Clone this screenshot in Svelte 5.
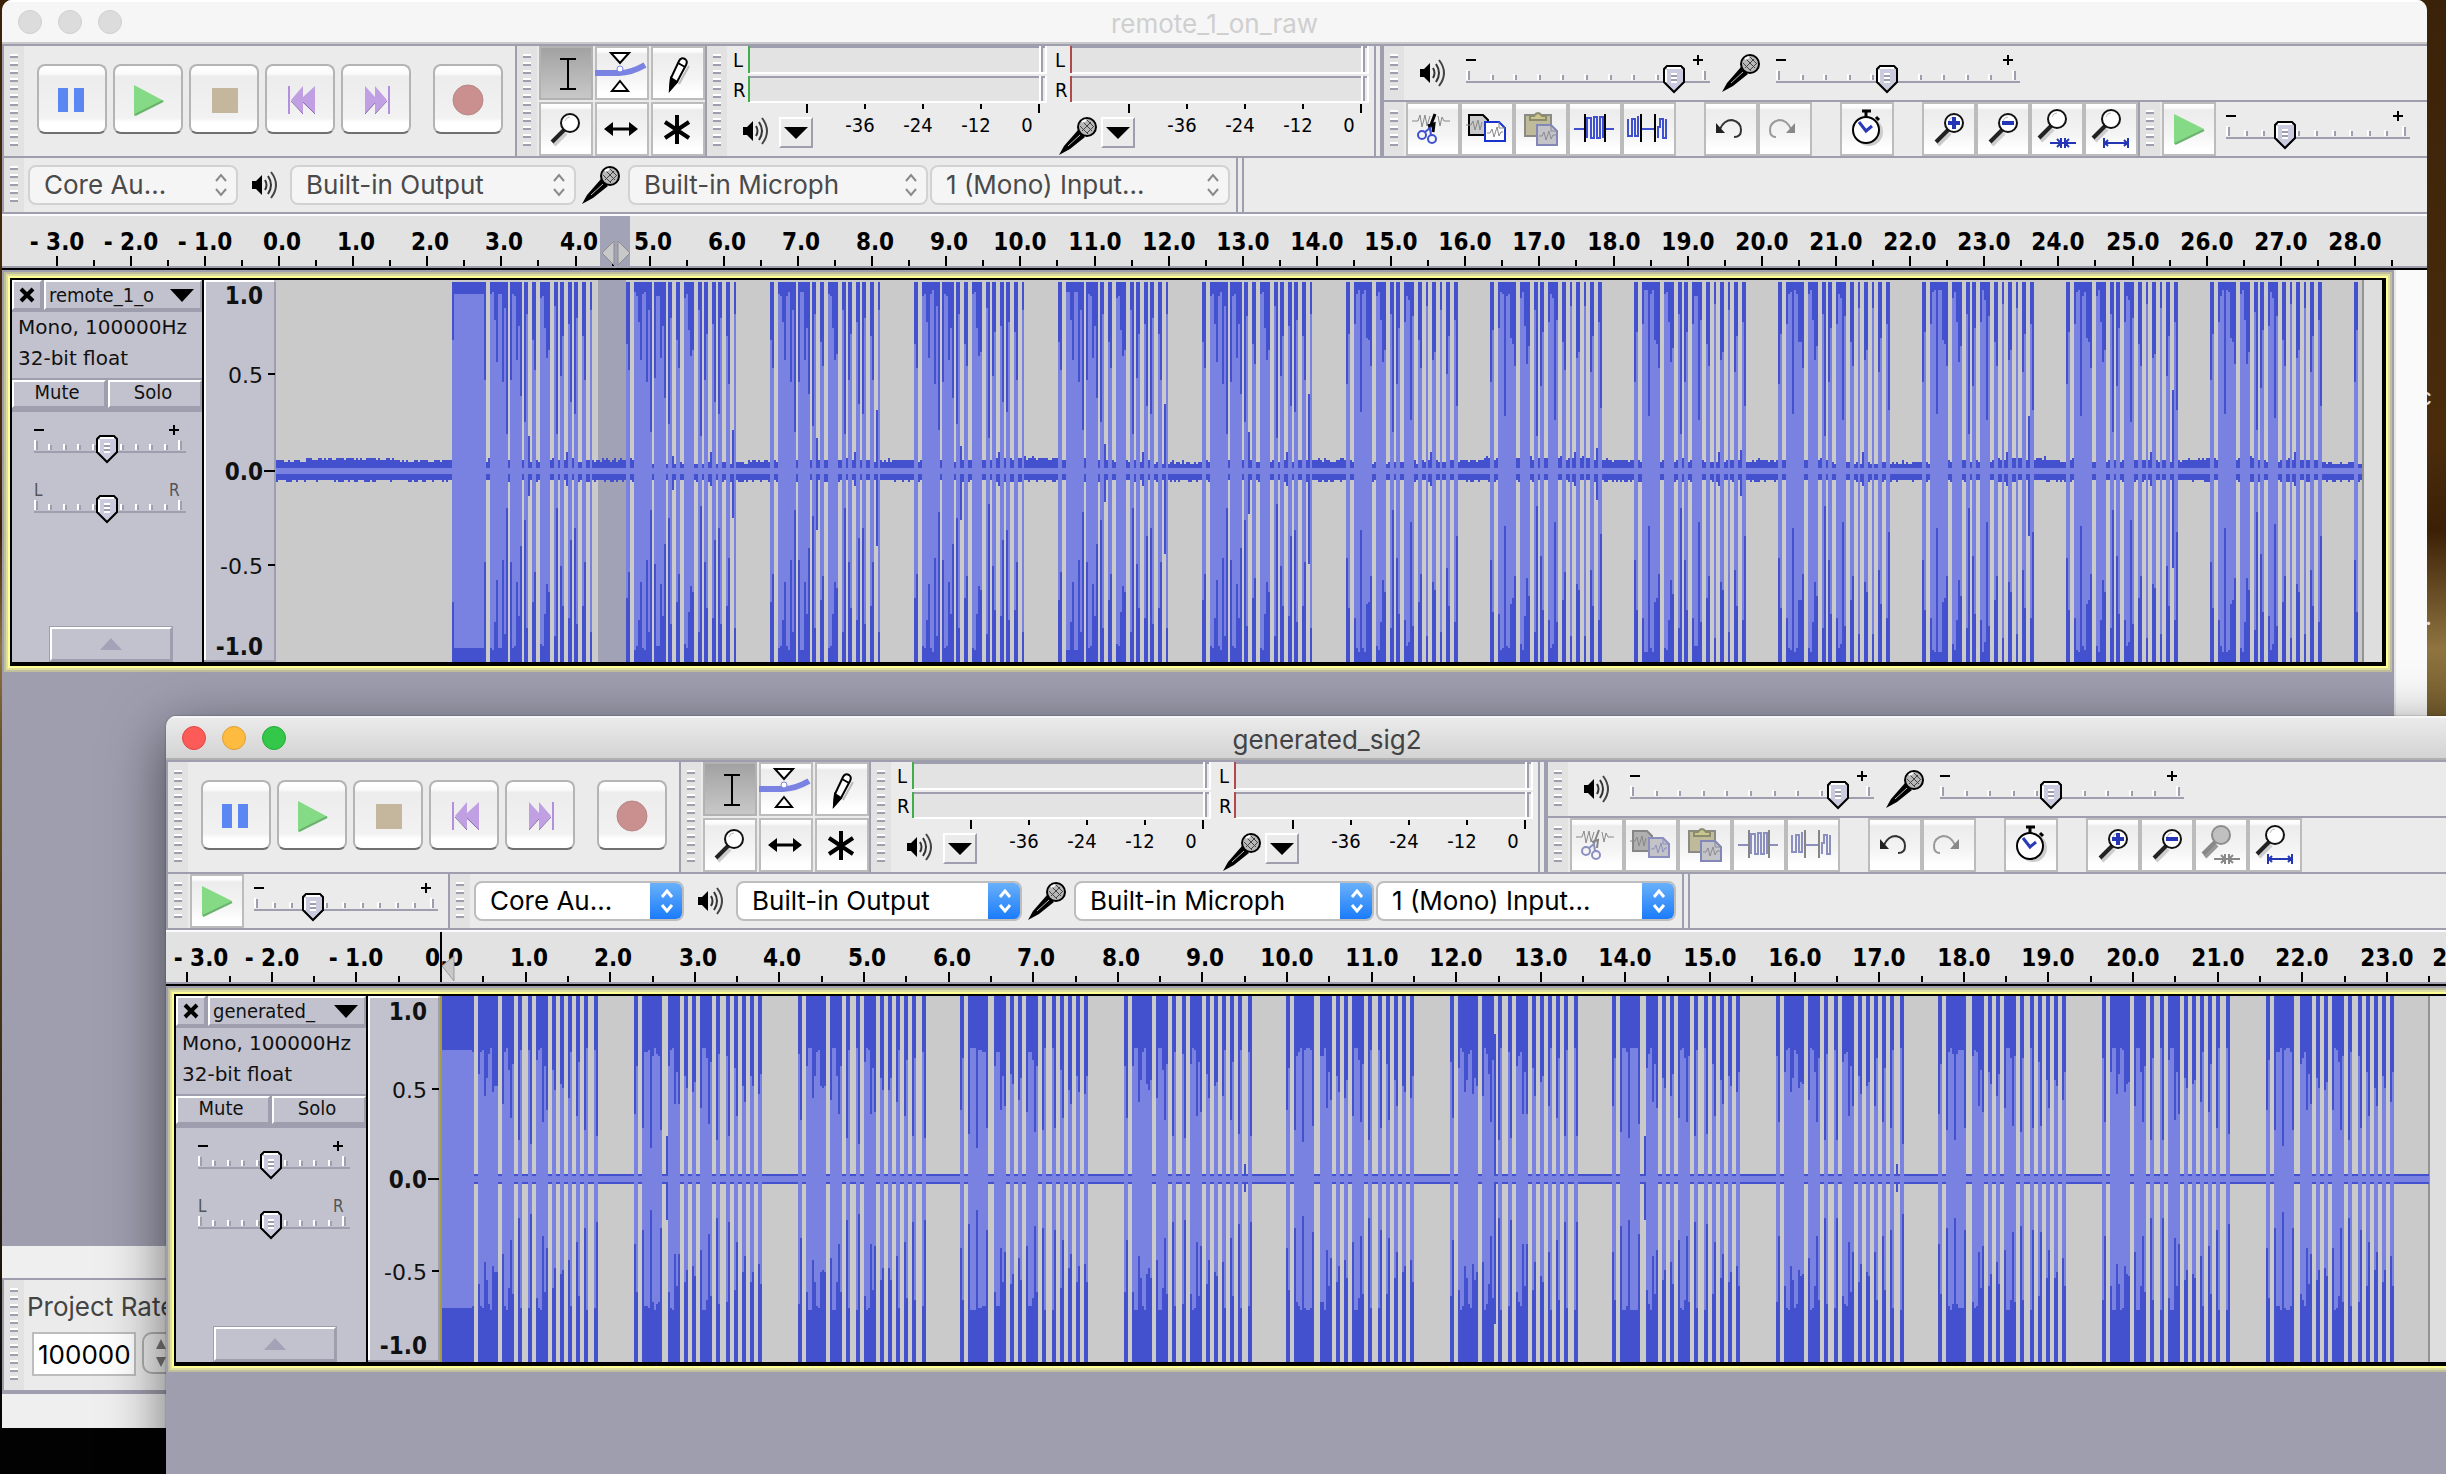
<script>
  const HOSTS = ['Core Au...'];
  const OUTPUTS = ['Built-in Output'];
  const INPUTS = ['Built-in Microph'];
  const CHANNELS = ['1 (Mono) Input...'];

  // Each bar of a burst: [offset, width, light-band tops per 2px column]
  const remoteEarly = [
    [0, 4, [215, 293]],
    [8, 18, [72, 72, 156, 275, 72, 66, 342, 114, 486]],
    [28, 12, [330, 72, 72, 270, 168, 378]],
    [42, 4, [462, 138]],
    [50, 4, [216, 293]],
    [58, 10, [78, 72, 174, 264, 246]],
    [72, 4, [114, 498]],
    [78, 4, [324, 192]],
    [86, 4, [162, 402]],
    [92, 4, [432, 150]],
    [100, 4, [192, 336]],
    [108, 2, [126]]
  ];
  const remoteLate = [
    [0, 4, [340, 185]],
    [8, 18, [165, 70, 66, 430, 70, 66, 210, 220, 288]],
    [30, 10, [78, 66, 160, 274, 236]],
    [44, 4, [126, 490]],
    [50, 4, [345, 180]],
    [58, 10, [162, 70, 84, 454, 144]],
    [72, 4, [216, 294]],
    [80, 2, [108]],
    [86, 4, [264, 243]],
    [94, 2, [114]],
    [100, 4, [312, 198]],
    [108, 4, [156, 414]]
  ];
  const signalEven = [
    [0, 4, [384, 252]],
    [8, 20, [450, 210, 204, 210, 492, 210, 204, 204, 216, 450]],
    [34, 12, [246, 216, 204, 372, 270, 378]],
    [50, 4, [294, 330]],
    [58, 4, [348, 288]],
    [66, 12, [396, 204, 204, 240, 438, 240]],
    [82, 4, [468, 216]],
    [92, 4, [216, 456]],
    [100, 4, [258, 420]],
    [108, 4, [312, 384]],
    [116, 4, [306, 330]],
    [124, 4, [348, 288]]
  ];
  const signalOdd = [
    [0, 4, [240, 414]],
    [8, 20, [270, 210, 210, 354, 288, 210, 216, 324, 312, 318]],
    [32, 12, [366, 204, 204, 270, 420, 246]],
    [48, 4, [468, 216]],
    [58, 4, [210, 474]],
    [66, 12, [240, 210, 204, 414, 264, 396]],
    [82, 4, [282, 342]],
    [90, 4, [318, 306]],
    [98, 4, [366, 216]],
    [106, 4, [408, 246]],
    [114, 4, [456, 216]],
    [124, 4, [210, 474]]
  ];

  const rect = (x, y, w, h) => `M${x} ${y}h${w}v${h}h${-w}z`;
  const even = (n) => Math.round(n / 2) * 2;

  function noise(seed) {
    let s = seed;
    return () => ((s = (s * 1103515245 + 12345) % 2147483648), s / 2147483648);
  }

  function remoteWave() {
    const mid = 191;
    const rnd = noise(7);
    let dark = '';
    let light = '';
    for (let x = 0; x < 2086; x += 2) {
      const drift = Math.sin(x / 38) + Math.sin(x / 91);
      const top = even(180 - drift + (rnd() < 0.4 ? 2 : 0) - (x > 180 && rnd() < 0.15 ? 2 : 0));
      const bottom = even(199 + (rnd() < 0.3 ? 2 : 0));
      dark += rect(x, top, 2, bottom - top);
    }
    light += rect(0, 188, 2086, 6);
    dark += rect(176, 2, 34, 380);
    light += rect(176, 60, 2, 262) + rect(178, 14, 30, 354) + rect(208, 100, 2, 182);
    for (let k = 0; k <= 13; k++) {
      const start = 206 + 144 * k;
      const bars = k < 6 ? remoteEarly : remoteLate;
      bars.forEach(([off, w, tops], i) => {
        if (k === 0 && i === 0) return;
        if (k === 13 && i > 0) return;
        dark += rect(start + off, 2, w, 380);
        tops.forEach((t, c) => {
          const y = even(t / 3 - 10 + (rnd() - 0.5) * 6);
          light += rect(start + off + c * 2, y, 2, 2 * (mid - y));
        });
      });
      if (k < 13) {
        const a = 150 + rnd() * 26;
        dark += rect(start + 46, even(a), 2, even(206 - a + rnd() * 50));
        dark += rect(start + 84, even(172), 2, 34);
        const b = 96 + rnd() * 76;
        if (k % 3 !== 0) dark += rect(start + 106, even(b), 2, even((mid - b) * 2.2));
      }
    }
    return { dark, light };
  }

  function signalWave() {
    const mid = 183;
    const rnd = noise(21);
    let dark = rect(0, 178, 1989, 10);
    let light = rect(0, 180, 1989, 6);
    dark += rect(2, 0, 32, 366);
    light += rect(0, 54, 32, 258) + rect(32, 56, 2, 254);
    for (let k = -1; k <= 10; k++) {
      const start = even(194 + 163.1 * k);
      const bars = k % 2 === 0 ? signalEven : signalOdd;
      bars.forEach(([off, w, tops], i) => {
        if (k === -1 && i === 0) return;
        dark += rect(start + off, 0, w, 366);
        tops.forEach((t, c) => {
          const y = Math.max(52, even(t / 3 - 16 + (rnd() - 0.5) * 12));
          light += rect(start + off + c * 2, y, 2, 2 * (mid - y));
        });
      });
      if (k % 3 === 2) dark += rect(start + 44, 38, 2, 290);
      if (k % 3 === 0) dark += rect(start + 32, 140, 2, 84);
      if (k % 4 === 3) dark += rect(start + 120, 168, 2, 28);
    }
    return { dark, light };
  }

  function timeline(zero, step, last, limit) {
    const marks = [];
    for (let i = -6; i <= last * 2 + 1; i++) {
      const n = i / 2;
      const major = i % 2 === 0;
      const x = Math.round(zero + step * n);
      const label = major ? (n < 0 ? `- ${-n}.0` : `${n}.0`) : '';
      const shift = n < 0 ? 0 : n < 10 ? 3 : 0;
      marks.push({ x, major, label, at: Math.max(33, Math.min(x + shift, limit)) });
    }
    return marks;
  }

  const windows = [
    {
      id: 'remote',
      title: 'remote_1_on_raw',
      name: 'remote_1_o',
      active: false,
      height: 382,
      length: 2086,
      wave: remoteWave(),
      selection: { x: 322, w: 28 },
      marks: timeline(275, 74.14, 28, 2400),
      scale: [['1.0', 15, true], ['0.5', 94, false], ['0.0', 191, true], ['-0.5', 285, false], ['-1.0', 366, true]]
    },
    {
      id: 'generated',
      title: 'generated_sig2',
      name: 'generated_',
      active: true,
      height: 366,
      length: 1988,
      wave: signalWave(),
      selection: null,
      marks: timeline(273, 84.6, 24, 2291),
      scale: [['1.0', 15, true], ['0.5', 93, false], ['0.0', 183, true], ['-0.5', 275, false], ['-1.0', 349, true]]
    }
  ];

  const transport = ['Pause', 'Play', 'Stop', 'Skip to Start', 'Skip to End', 'Record'];
  const tools = ['Selection', 'Envelope', 'Draw', 'Zoom', 'Time Shift', 'Multi'];
  const editGroups = [
    ['Cut', 'Copy', 'Paste', 'Trim', 'Silence'],
    ['Undo', 'Redo'],
    ['Sync-Lock'],
    ['Zoom In', 'Zoom Out', 'Fit Selection', 'Fit Project']
  ];
  const dimmed = (active, name) =>
    name === 'Paste' || name === 'Redo' ||
    (active && ['Cut', 'Copy', 'Trim', 'Silence', 'Fit Selection'].includes(name));
</script>

{#snippet speaker()}
  <svg class="speaker" viewBox="0 0 26 28" aria-hidden="true">
    <path d="M0 10h4l6-6v20l-6-6H0z" fill="#000" />
    <path d="M13 9q3 5 0 10M16 5q6 9 0 18" fill="none" stroke="#333" stroke-width="2" />
    <path d="M19 1q10 13 0 26" fill="none" stroke="#444" stroke-width="2" />
  </svg>
{/snippet}

{#snippet mic()}
  <svg class="mic" viewBox="0 0 38 38" aria-hidden="true">
    <path d="M0 38L5 29L19 13L26 20L11 32Z" fill="#000" />
    <path d="M9 29L21 18" stroke="#bbb" stroke-width="1" />
    <circle cx="28" cy="10" r="9" fill="#b8b8b8" stroke="#000" stroke-width="2" />
    <path d="M24 5l9 9M28 3l7 7M21 9l8 8M32 5L23 14M34 10l-6 6" stroke="#444" />
    <path d="M23 5l4-2" stroke="#fff" stroke-width="2" />
  </svg>
{/snippet}

{#snippet slider(label, w, pos, ends)}
  <div class="slider">
    <svg width={w} height="40" viewBox={`0 0 ${w} 40`} aria-hidden="true" shape-rendering="crispEdges">
      {#if ends === 'LR'}
        <text class="pan" x="0" y="12">L</text>
        <text class="pan" x={w - 17} y="12">R</text>
      {:else}
        <path d={`M0 6h10M${w - 17} 6h10M${w - 12} 1v10`} stroke="#000" stroke-width="2" />
      {/if}
      {#each Array(11) as _, i}
        {@const x = 1 + Math.round(((w - 8) * i) / 10)}
        {@const y = i % 10 === 0 ? 16 : 20}
        <path d={`M${x} ${y}V26`} stroke="#fff" stroke-width="2" />
        <path d={`M${x + 2} ${y + 1}V26`} stroke="#9e9eaf" stroke-width="2" />
      {/each}
      <path d={`M0 28H${w}`} stroke="#9e9eaf" stroke-width="2" />
      <g transform={`translate(${pos - 11} 11)`} shape-rendering="auto">
        <path d="M4 1H18L21 4V17L11 27L1 17V4Z" fill="#cbcbdf" stroke="#000" stroke-width="2" />
        <path d="M4 3H18M3 5V17" stroke="#fff" stroke-width="2" />
        <path d="M8 9h6M8 13h6M8 17h6" stroke="#fff" stroke-width="2" />
        <path d="M8 11h6M8 15h6" stroke="#9e9eaf" stroke-width="2" />
      </g>
    </svg>
    <input type="range" aria-label={label} min="0" max={w} value={pos} />
  </div>
{/snippet}

{#snippet transportIcon(name)}
  <svg viewBox="0 0 70 70" aria-hidden="true">
    {#if name === 'Pause'}
      <path d="M21 24h10v24H21zM37 24h10v24H37z" fill="#5b87f2" />
    {:else if name === 'Play'}
      <path d="M21 21L51 37L21 52Z" fill="#85da86" />
      <path d="M22 51L50 37" stroke="#6bb36d" stroke-width="2" />
    {:else if name === 'Stop'}
      <path d="M23 24h26v25H23z" fill="#c4b79d" />
    {:else if name === 'Skip to Start'}
      <path d="M26 36L38 22V33L50 22V50L38 39V50Z" fill="#c0a0e2" />
      <path d="M38 50L26 37M50 50L38 38" stroke="#8f6fae" />
      <path d="M24 22V50" stroke="#b48fdd" stroke-width="2" />
    {:else if name === 'Skip to End'}
      <path d="M46 36L34 22V33L24 22V50L34 39V50Z" fill="#c0a0e2" />
      <path d="M24 50L34 39M34 50L46 37" stroke="#8f6fae" />
      <path d="M48 22V50" stroke="#b48fdd" stroke-width="2" />
    {:else}
      <circle cx="35" cy="36" r="15" fill="#ca9090" stroke="#b98585" />
    {/if}
  </svg>
{/snippet}

{#snippet glass(cx, cy, off)}
  <path d={`M${cx - 6} ${cy + 9}L${cx - 18} ${cy + 21}`} stroke={off ? '#999' : '#ccc'} stroke-width="4" transform="translate(2 1)" />
  <path d={`M${cx - 6} ${cy + 7}L${cx - 18} ${cy + 19}`} stroke={off ? '#888' : '#222'} stroke-width="4" />
  <circle {cx} {cy} r="9" fill={off ? '#c0c0c0' : '#fff'} stroke={off ? '#8c8c8c' : '#111'} stroke-width="2" />
  <path d={`M${cx - 5} ${cy - 2}q1-4 5-4`} stroke="#bbb" stroke-width="1" fill="none" />
{/snippet}

{#snippet toolIcon(name, off)}
  {@const ink = off ? '#858585' : '#000'}
  {@const blue = off ? '#8a8fc0' : '#3f50d0'}
  <svg viewBox="0 0 54 54" fill="none" aria-hidden="true">
    {#if name === 'Selection'}
      <path d="M21 13H27M31 13H37M21 43H27M31 43H37M29 14V42" stroke="#000" stroke-width="2" />
      <path d="M26 13h6M26 43h6" stroke="#000" stroke-width="2" />
    {:else if name === 'Envelope'}
      <path d="M0 27H24Q36 27 50 19" stroke="#7a82e2" stroke-width="6" />
      <path d="M16 7H34L25 17ZM25 35L33 45H17Z" fill="#fff" stroke="#000" stroke-width="2" />
      <circle cx="25" cy="23" r="3" fill="#fff" stroke="#7a82e2" />
    {:else if name === 'Draw'}
      <path d="M28 15q2-4 6-2q3 2 1 6L26 36l-7 7 1-11Z" fill="#fff" stroke="#000" stroke-width="2" />
      <path d="M20 32l6 4-7 8ZM27 17l7 4" fill="#000" stroke="#000" stroke-width="2" />
      <path d="M38 20L28 38" stroke="#bbb" stroke-width="2" />
    {:else if name === 'Zoom'}
      {@render glass(31, 21, false)}
    {:else if name === 'Time Shift'}
      <path d="M14 27H38" stroke="#000" stroke-width="3" />
      <path d="M9 27L18 20V34ZM43 27L34 20V34Z" fill="#000" />
    {:else if name === 'Multi'}
      <path d="M26 13V42M14 20L38 36M38 20L14 36" stroke="#000" stroke-width="4" />
    {:else if name === 'Cut'}
      <path d="M6 19H12L14 13L16 25L19 13L21 24L24 14M32 14L34 24L36 15L38 19H44" stroke="#888" stroke-width="1" />
      <path d="M29 12L23 28M22 24L28 22L27 30" stroke={ink} stroke-width={off ? 2 : 3} />
      <circle cx="16" cy="33" r="4" stroke={blue} stroke-width="2" />
      <circle cx="26" cy="37" r="4" stroke={blue} stroke-width="2" />
      <path d="M19 30L24 26L25 33" stroke={blue} stroke-width="2" />
    {:else if name === 'Copy'}
      <path d="M9 13H23L28 18V33H9Z" fill={off ? '#b0b0b0' : '#cacaca'} stroke={ink} stroke-width="2" />
      <path d="M6 23H11L13 19L15 28L18 18L20 28L22 20" stroke="#888" />
      <path d="M25 20H39L45 26V39H25Z" fill={off ? '#c4c4c8' : '#fff'} stroke={off ? '#8a8fc0' : '#1933cf'} stroke-width="2" />
      <path d="M27 31H30L32 27L34 35L37 25L39 34L41 30H43M39 20V26H45" stroke={off ? '#8a8fc0' : '#888'} />
    {:else if name === 'Paste'}
      <path d="M11 13H37V34H11Z" fill="#bfbb9a" stroke="#8b8b86" stroke-width="2" />
      <path d="M16 18V14H20Q24 8 28 14H32V18Z" fill="#c9c58c" stroke="#8b8b70" stroke-width="2" />
      <path d="M23 23H37L43 29V43H23Z" fill="#c4c4c8" stroke="#8287b8" stroke-width="2" />
      <path d="M25 34H28L30 30L32 38L35 29L37 37L39 33H42M37 23V29H43" stroke="#8a8a92" />
    {:else if name === 'Trim'}
      <path d="M6 27H17M38 27H46" stroke={blue} stroke-width="2" />
      <path d="M19 36V16H23V36H26V15H29V36H32V15H35V36" stroke={blue} stroke-width="2" />
      <path d="M17 12V40M37 12V40" stroke={ink} stroke-width="2" />
    {:else if name === 'Silence'}
      <path d="M6 17V34H10V17H13V34H16V14M20 27H33M36 36V25H38V17H41V36H44V17" stroke={blue} stroke-width="2" />
      <path d="M19 12V40M33 12V40" stroke={ink} stroke-width="2" />
    {:else if name === 'Undo'}
      <path d="M16 27Q20 18 28 18Q37 20 37 28Q37 35 30 35" stroke="#333" stroke-width="2" />
      <path d="M12 21V31H21Z" fill="#222" />
    {:else if name === 'Redo'}
      <path d="M33 27Q29 18 21 18Q12 20 12 28Q12 35 18 35" stroke="#999" stroke-width="2" />
      <path d="M37 21V31H28Z" fill="#888" />
    {:else if name === 'Sync-Lock'}
      <circle cx="29" cy="30" r="14" fill="#ccc" />
      <circle cx="26" cy="28" r="13" fill="#fff" stroke="#000" stroke-width="2" />
      <path d="M22 9H31M26 9V15M36 15L39 18" stroke="#000" stroke-width="3" />
      <path d="M19 20L26 29L32 24" stroke="#2a3bb8" stroke-width="3" />
    {:else if name === 'Zoom In'}
      {@render glass(32, 21, false)}
      <path d="M26 21H38M32 15V27" stroke="#2536b5" stroke-width="4" />
    {:else if name === 'Zoom Out'}
      {@render glass(32, 21, false)}
      <path d="M26 21H38" stroke="#2536b5" stroke-width="4" />
    {:else if name === 'Fit Selection'}
      {@render glass(27, 17, off)}
      <path d="M20 41H46M31 36V46M35 36V46M27 37L31 41L27 45M39 37L35 41L39 45" stroke={off ? '#888' : '#2536b5'} stroke-width="2" />
    {:else if name === 'Fit Project'}
      {@render glass(27, 17, false)}
      <path d="M20 41H44M20 36V46M44 36V46M24 38L21 41L24 44M40 38L43 41L40 44" stroke="#2536b5" stroke-width="2" />
    {:else}
      <path d="M12 12L42 27L12 42Z" fill="#85da86" />
      <path d="M13 42L42 28" stroke="#6bb36d" stroke-width="2" />
    {/if}
  </svg>
{/snippet}

{#snippet meter(kind, color)}
  <div class="meter">
    <svg width="322" height="67" viewBox="0 0 322 67" shape-rendering="crispEdges" role="img" aria-label={`${kind} level`}>
      {#each [['L', 0, 27], ['R', 30, 26]] as [channel, y, h]}
        <text class="channel" x="6" y={y + 21}>{channel}</text>
        <rect x="23" {y} width="290" height={h} fill="#e3e3e3" />
        <path d={`M23 ${y + 1}H320`} stroke="#9e9eaf" stroke-width="2" />
        <path d={`M22 ${y + h}H320M313 ${y}V${y + h}M319 ${y}V${y + h}`} stroke="#fff" stroke-width="2" />
        <path d={`M315 ${y}V${y + h - 1}`} stroke="#9e9eaf" stroke-width="2" />
        <path d={`M22 ${y}v${h}`} stroke={color} stroke-width="2" />
      {/each}
      <path d="M80 58v9M138 58v5M196 58v5M254 58v5M312 58v9" stroke="#000" stroke-width="2" />
    </svg>
    <div class="meter-foot">
      <span class="meter-icon">{#if kind === 'Output'}{@render speaker()}{:else}{@render mic()}{/if}</span>
      <button class="drop" aria-label={`${kind} meter menu`}>
        <svg viewBox="0 0 24 14" aria-hidden="true"><path d="M0 1H24L12 13Z" /></svg>
      </button>
      <div class="decibels"><span>-36</span><span>-24</span><span>-12</span><span>0</span></div>
    </div>
  </div>
{/snippet}

{#snippet picker(label, options, size)}
  <span class="picker {size}">
    <select aria-label={label}>
      {#each options as option}<option>{option}</option>{/each}
    </select>
    <span class="arrows">
      <svg viewBox="0 0 14 24" aria-hidden="true"><path d="M2 8L7 2L12 8M2 16L7 22L12 16" /></svg>
    </span>
  </span>
{/snippet}

{#snippet playSpeed()}
  <div class="grip"></div>
  <button class="tool speed-play" aria-label="Play-at-Speed">{@render toolIcon('Play', false)}</button>
  {@render slider('Playback Speed', 184, 59, 'gain')}
{/snippet}

<main class="desktop">
  <div class="peek"><span>c</span><span>.</span></div>
  {#each windows as win}
    <section class="window {win.id}" class:active={win.active}>
      <header class="titlebar">
        <div class="lights">
          <button aria-label="Close"></button><button aria-label="Minimize"></button><button aria-label="Zoom"></button>
        </div>
        <h1>{win.title}</h1>
      </header>

      <div class="dock">
        <div class="bar transport">
          <div class="grip"></div>
          {#each transport as name}
            <button class="big" class:record={name === 'Record'} aria-label={name}>{@render transportIcon(name)}</button>
          {/each}
        </div>
        <div class="bar">
          <div class="grip"></div>
          <div class="tools">
            {#each tools as name, i}
              <button class="tool" class:pressed={i === 0} aria-label={`${name} Tool`}>{@render toolIcon(name, false)}</button>
            {/each}
          </div>
        </div>
        <div class="bar meters">
          <div class="grip"></div>
          {@render meter('Output', '#3fae49')}
          {@render meter('Input', '#b04a4a')}
        </div>
        <div class="stack">
          <div class="bar mixer">
            <div class="grip"></div>
            {@render speaker()}
            {@render slider('Output Volume', 244, 208, 'gain')}
            {@render mic()}
            {@render slider('Input Volume', 244, 111, 'gain')}
          </div>
          <div class="bar edit">
            <div class="grip"></div>
            <div class="groups">
              {#each editGroups as group}
                <div class="group">
                  {#each group as name}
                    <button class="tool" aria-label={name}>{@render toolIcon(name, dimmed(win.active, name))}</button>
                  {/each}
                </div>
              {/each}
            </div>
            {#if !win.active}
              <div class="bar speed">{@render playSpeed()}</div>
            {/if}
          </div>
        </div>
      </div>

      <div class="devices">
        {#if win.active}
          <div class="bar speed lead">{@render playSpeed()}</div>
        {/if}
        <div class="grip"></div>
        {@render picker('Audio Host', HOSTS, 'host')}
        {@render speaker()}
        {@render picker('Output Device', OUTPUTS, 'output')}
        {@render mic()}
        {@render picker('Input Device', INPUTS, 'input')}
        {@render picker('Input Channels', CHANNELS, 'channels')}
        <div class="stop"></div>
      </div>

      <div class="timeline">
        <svg width="100%" height="50" shape-rendering="crispEdges" role="img" aria-label="Timeline">
          {#if win.selection}
            <rect x="596" y="0" width="30" height="50" fill="#a3a3b8" />
          {/if}
          {#each win.marks as mark}
            <path d={`M${mark.x} ${mark.major ? 40 : 44}V50`} stroke="#000" stroke-width="2" />
            {#if mark.label}<text x={mark.at} y="34">{mark.label}</text>{/if}
          {/each}
          {#if win.selection}
            <path d="M610 25V49L598 37ZM614 25V49L626 37Z" fill="#c8c8c8" stroke="#8d8d8d" shape-rendering="auto" />
          {:else}
            <path d="M286 24V49L274 34Z" fill="#c8c8c8" stroke="#999" shape-rendering="auto" />
            <path d="M273 0V50" stroke="#000" stroke-width="2" />
          {/if}
        </svg>
      </div>

      <div class="workspace">
        <div class="canvas">
          <article class="track">
            <div class="panel">
              <div class="panel-head">
                <button class="flat close" aria-label="Close track">
                  <svg viewBox="0 0 16 16" aria-hidden="true"><path d="M2 2L14 14M14 2L2 14" stroke="#000" stroke-width="4" /></svg>
                </button>
                <button class="flat name">
                  <span>{win.name}</span>
                  <svg viewBox="0 0 24 13" aria-hidden="true"><path d="M0 0H24L12 13Z" /></svg>
                </button>
              </div>
              <p class="info">Mono, 100000Hz<br />32-bit float</p>
              <div class="mutes">
                <button class="flat">Mute</button>
                <button class="flat">Solo</button>
              </div>
              <div class="sliders">
                {@render slider('Gain', 152, 73, 'gain')}
                {@render slider('Pan', 152, 73, 'LR')}
              </div>
              <button class="flat collapse" aria-label="Collapse track">
                <svg viewBox="0 0 22 12" aria-hidden="true"><path d="M11 0L22 12H0Z" fill="#a3a3b8" /></svg>
              </button>
            </div>
            <svg class="vruler" width="72" height={win.height} shape-rendering="crispEdges" role="img" aria-label="Amplitude">
              <rect width="72" height={win.height} fill="#c2c2ce" />
              <path d={`M0 1H70M1 0V${win.height}`} stroke="#fff" stroke-width="2" />
              <path d={`M71 2V${win.height}M0 ${win.height - 1}H72`} stroke="#9e9eaf" stroke-width="2" />
              {#each win.scale as [label, y, strong], i}
                <text class:strong x="59" y={y + 9}>{label}</text>
                {#if i > 0 && i < 4}
                  <path d={`M${i === 2 ? 60 : 64} ${y}H71`} stroke="#000" stroke-width="2" />
                {/if}
              {/each}
            </svg>
            <div class="view">
              <svg width="100%" height={win.height} shape-rendering="crispEdges" role="img" aria-label={`${win.name} waveform`}>
                <rect width={win.length} height={win.height} fill="#cacaca" />
                <rect x={win.length} width="2" height={win.height} fill="#939393" />
                {#if win.selection}
                  <rect x={win.selection.x} width={win.selection.w} height={win.height} fill="#a2a2b6" />
                {/if}
                <path d={win.wave.dark} fill="#4351cf" />
                <path d={win.wave.light} fill="#7981e1" />
                {#if !win.selection}
                  <path d={`M1 0V${win.height}`} stroke="#a59c45" stroke-width="2" />
                {/if}
              </svg>
            </div>
          </article>
        </div>
        <div class="scroll"></div>
      </div>

      {#if !win.active}
        <footer class="status">
          <div class="selection-bar">
            <div class="grip"></div>
            <div class="rate">
              <label for="rate">Project Rate (Hz):</label>
              <div class="rate-row">
                <input id="rate" type="text" value="100000" />
                <button class="spin" aria-label="Change rate">
                  <svg viewBox="0 0 12 32" aria-hidden="true"><path d="M6 2L11 12H1ZM6 30L11 20H1Z" fill="#777" /></svg>
                </button>
              </div>
            </div>
          </div>
        </footer>
      {/if}
    </section>
  {/each}
</main>

<style>
  :global(body) {
    margin: 0;
  }
  .desktop {
    --line: #9e9eaf;
    --face: #ebebeb;
    position: relative;
    min-height: 100vh;
    overflow: hidden;
    background: linear-gradient(#3a2208 0, #4a2c0c 30%, #3c2006 36%, #8f7440 44%, #6d5526 50%, #020202 97%);
    font-family: Inter, 'Liberation Sans', sans-serif;
    color: #000;
  }
  .desktop * {
    box-sizing: border-box;
  }
  .peek {
    position: absolute;
    top: 381px;
    right: 14px;
    display: flex;
    flex-direction: column;
    align-items: flex-end;
    gap: 188px;
    color: #e4e4e4;
    font-size: 24px;
    line-height: 32px;
  }
  button {
    padding: 0;
    border: 0;
    background: none;
    font: inherit;
    color: inherit;
  }
  svg {
    display: block;
    flex: none;
  }
  .window {
    position: absolute;
    display: flex;
    flex-direction: column;
    overflow: hidden;
    background: var(--line);
    border-radius: 10px 10px 0 0;
  }
  .remote {
    top: 0;
    left: 2px;
    right: 19px;
    bottom: 46px;
  }
  .generated {
    top: 716px;
    left: 166px;
    right: -42px;
    bottom: -60px;
    box-shadow: 0 16px 60px rgba(0, 0, 0, 0.55), 0 0 2px rgba(0, 0, 0, 0.4);
  }
  .titlebar {
    display: grid;
    grid-template-columns: 1fr auto 1fr;
    align-items: center;
    height: 46px;
    padding: 0 16px;
    background: #f6f6f6;
    border-bottom: 2px solid var(--line);
    box-shadow: inset 0 -2px #c9c9cb, inset 0 2px #fff;
  }
  .active .titlebar {
    background: linear-gradient(#ececec, #d2d2d2);
    box-shadow: inset 0 -2px #b0b0b0, inset 0 2px #f6f6f6;
  }
  .titlebar h1 {
    margin: 3px 0 0;
    font-size: 26px;
    line-height: 32px;
    font-weight: 400;
    color: #cfcfcf;
  }
  .active .titlebar h1 {
    color: #434343;
  }
  .lights {
    display: flex;
    gap: 16px;
  }
  .lights button {
    width: 24px;
    height: 24px;
    border: 1px solid #cfcfcf;
    border-radius: 50%;
    background: #dcdcdc;
  }
  .active .lights button:nth-child(1) {
    background: #fc5b57;
    border-color: #df4744;
  }
  .active .lights button:nth-child(2) {
    background: #fdbc3f;
    border-color: #de9f34;
  }
  .active .lights button:nth-child(3) {
    background: #34c84a;
    border-color: #27aa35;
  }
  .dock,
  .devices {
    display: flex;
    padding-left: 2px;
    background: linear-gradient(var(--line), var(--line)) 0 0 / 2px 100% no-repeat var(--face);
    border-bottom: 2px solid var(--line);
  }
  .dock {
    height: 112px;
  }
  .bar {
    display: flex;
    flex: none;
    align-items: center;
    border-right: 2px solid var(--line);
  }
  .grip {
    display: flex;
    align-self: stretch;
    flex: none;
    width: 20px;
    padding: 8px 6px;
    background: #e2e2e2;
  }
  .grip::before {
    content: '';
    flex: 1;
    background: repeating-linear-gradient(#fff 0 2px, var(--line) 2px 4px, transparent 4px 8px);
  }
  .transport {
    gap: 6px;
    padding-right: 12px;
  }
  .transport .grip {
    margin-right: 7px;
  }
  .big {
    width: 70px;
    height: 70px;
    margin-bottom: 4px;
    border: 2px solid #b4b4b4;
    border-bottom-color: #707070;
    border-radius: 8px;
    background: linear-gradient(#fff 0, #fafafa 12%, #ececec 16%, #f2f2f2 78%, #fff 86%);
    overflow: hidden;
  }
  .big svg {
    width: 70px;
    height: 70px;
    margin: -2px;
  }
  .record {
    margin-left: 16px;
  }
  .tools {
    display: grid;
    grid-template-columns: repeat(3, 54px);
    gap: 2px;
    margin-left: 2px;
  }
  .tool {
    flex: none;
    width: 54px;
    height: 54px;
    border: 2px solid #bcbcbc;
    background: linear-gradient(#fff 0, #fafafa 8%, #ececec 12%, #f4f4f4 60%, #fff 90%);
  }
  .tool svg {
    width: 54px;
    height: 54px;
    margin: -2px;
  }
  .pressed {
    border-color: #b2b2b2;
    background: linear-gradient(#a2a2a2, #c8c8c8);
  }
  .meters {
    padding-right: 3px;
    margin-right: 4px;
  }
  .meter {
    display: flex;
    flex-direction: column;
    width: 322px;
    height: 110px;
    font-family: 'DejaVu Sans', sans-serif;
    font-size: 20px;
  }
  .channel {
    font-family: 'DejaVu Sans Condensed', 'DejaVu Sans', sans-serif;
    font-size: 20px;
  }
  .meter-foot {
    display: flex;
    align-items: flex-start;
    padding-top: 4px;
  }
  .meter-icon {
    display: flex;
    justify-content: center;
    width: 55px;
    padding-left: 6px;
  }
  .drop {
    display: grid;
    place-items: center;
    width: 36px;
    height: 31px;
    border: 2px solid #fff;
    border-right-color: var(--line);
    border-bottom-color: var(--line);
  }
  .drop svg {
    width: 24px;
    height: 14px;
  }
  .decibels {
    display: flex;
    margin-left: 18px;
    font-family: 'DejaVu Sans Condensed', 'DejaVu Sans', sans-serif;
    line-height: 16px;
  }
  .decibels span {
    width: 58px;
    text-align: center;
  }
  .decibels span:last-child {
    width: 44px;
  }
  .speaker {
    width: 26px;
    height: 28px;
  }
  .mic {
    width: 38px;
    height: 38px;
  }
  .stack {
    flex: 1;
    display: flex;
    flex-direction: column;
    min-width: 0;
    border-left: 4px solid var(--line);
  }
  .mixer,
  .edit {
    height: 54px;
    border: 0;
  }
  .mixer {
    height: 56px;
    border-bottom: 2px solid var(--line);
  }
  .mixer .speaker {
    margin: 0 20px 0 16px;
  }
  .mixer .mic {
    margin: 0 16px 0 12px;
  }
  .groups {
    display: flex;
    gap: 28px;
    margin-left: 2px;
  }
  .group {
    display: flex;
  }
  .slider {
    position: relative;
    flex: none;
  }
  .slider svg {
    overflow: visible;
  }
  .bar .slider {
    margin-top: 2px;
  }
  .slider input {
    position: absolute;
    inset: 0;
    width: 100%;
    height: 100%;
    margin: 0;
    opacity: 0;
  }
  .pan {
    font-family: 'DejaVu Sans Condensed', 'DejaVu Sans', sans-serif;
    font-size: 17px;
    fill: #555;
  }
  .speed {
    border: 0;
    border-left: 2px solid var(--line);
  }
  .speed-play {
    margin: 0 10px 0 2px;
  }
  .lead {
    padding-right: 10px;
    border-left: 0;
    border-right: 2px solid var(--line);
  }
  .devices {
    align-items: center;
    height: 56px;
  }
  .devices > .speaker {
    margin: 0 12px 0 14px;
  }
  .devices > .mic {
    margin: 0 8px 0 6px;
  }
  .picker {
    display: flex;
    flex: none;
    height: 40px;
    border: 2px solid #d2d2d2;
    border-radius: 8px;
    background: #f5f5f5;
    overflow: hidden;
  }
  .picker select {
    flex: 1;
    min-width: 0;
    padding: 0 0 0 14px;
    border: 0;
    appearance: none;
    background: none;
    font: 26px/36px Inter, 'Liberation Sans', sans-serif;
    color: #4a4a4a;
  }
  .host {
    width: 210px;
    margin-left: 4px;
  }
  .output {
    width: 286px;
  }
  .input {
    width: 300px;
    margin-right: 2px;
  }
  .channels {
    width: 300px;
  }
  .arrows {
    display: grid;
    place-items: center;
    width: 30px;
  }
  .arrows svg {
    width: 14px;
    height: 24px;
    fill: none;
    stroke: #8a8a8a;
    stroke-width: 2;
  }
  .active .picker {
    background: #fff;
    border-color: #bdbdbd;
  }
  .active .picker select {
    color: #000;
  }
  .active .arrows {
    width: 34px;
    margin: -2px;
    background: linear-gradient(#6db3fa, #1679fb);
  }
  .active .arrows svg {
    stroke: #fff;
    stroke-width: 3;
  }
  .stop {
    align-self: stretch;
    width: 8px;
    margin-left: 6px;
    border: solid var(--line);
    border-width: 0 2px;
  }
  .timeline {
    height: 54px;
    padding-left: 2px;
    border-top: 2px solid #fafaff;
    border-bottom: 2px solid var(--line);
    background: #e2e2e2;
    overflow: hidden;
    flex: none;
  }
  .timeline text {
    font: bold 24px 'DejaVu Sans Condensed', 'DejaVu Sans', sans-serif;
    text-anchor: middle;
  }
  .workspace {
    flex: 1;
    display: flex;
    min-height: 0;
    border-top: 2px solid #000;
  }
  .canvas {
    flex: 1;
    min-width: 0;
    padding: 2px 2px 0;
  }
  .scroll {
    width: 33px;
    border-left: 2px solid #e6e6e6;
    background: #fafafa;
  }
  .active .scroll {
    width: 20px;
  }
  .track {
    display: flex;
    margin: 6px;
    border: solid #000;
    border-width: 2px 4px 4px 2px;
    box-shadow: 0 0 0 2px #ffff96, 0 0 0 4px #dedea0, 0 0 0 6px #bfbf9b;
    background: #dedede;
  }
  .panel {
    display: flex;
    flex-direction: column;
    flex: none;
    width: 192px;
    border-right: 2px solid #000;
    background: #c2c2ce;
    font-family: 'DejaVu Sans Condensed', 'DejaVu Sans', sans-serif;
    font-size: 20px;
    color: #111;
  }
  .panel-head {
    display: flex;
    gap: 2px;
    height: 32px;
    background: var(--line);
    border-bottom: 2px solid var(--line);
  }
  .flat {
    border: 2px solid #fff;
    border-right-color: var(--line);
    border-bottom-color: var(--line);
    background: #c2c2ce;
  }
  .close {
    display: grid;
    place-items: center;
    width: 30px;
  }
  .close svg {
    width: 16px;
    height: 16px;
  }
  .name {
    flex: 1;
    display: flex;
    align-items: center;
    justify-content: space-between;
    padding: 0 6px 0 3px;
    white-space: nowrap;
  }
  .name svg {
    width: 24px;
    height: 13px;
  }
  .info {
    height: 68px;
    margin: 0;
    padding-left: 6px;
    font-family: 'DejaVu Sans', sans-serif;
    font-size: 20px;
    line-height: 31px;
    border-bottom: 2px solid var(--line);
  }
  .mutes {
    display: grid;
    grid-template-columns: 1fr 1fr;
    gap: 2px;
    height: 32px;
    background: var(--line);
    border-bottom: 4px solid var(--line);
  }
  .mutes .flat {
    padding: 0 4px 3px 0;
    line-height: 21px;
  }
  .sliders {
    display: flex;
    flex-direction: column;
    gap: 20px;
    padding: 12px 0 0 22px;
  }
  .collapse {
    display: grid;
    place-items: center;
    align-self: flex-end;
    width: 122px;
    height: 34px;
    margin: auto 30px 1px 0;
    outline: 1px solid var(--line);
  }
  .collapse svg {
    width: 22px;
    height: 12px;
  }
  .vruler text {
    font: 22px 'DejaVu Sans', sans-serif;
    text-anchor: end;
    fill: #111;
  }
  .vruler text.strong {
    font: bold 24px 'DejaVu Sans Condensed', 'DejaVu Sans', sans-serif;
  }
  .view {
    flex: 1;
    min-width: 0;
    overflow: hidden;
  }
  .status {
    flex: none;
    padding: 32px 0 34px;
    background: #efefef;
  }
  .selection-bar {
    display: flex;
    height: 116px;
    border: 2px solid var(--line);
    border-bottom-width: 4px;
    background: var(--face);
  }
  .rate {
    display: flex;
    flex-direction: column;
    padding: 10px 0 0 3px;
    font-size: 26px;
    line-height: 34px;
    color: #444;
  }
  .rate-row {
    display: flex;
    gap: 6px;
    padding: 8px 0 0 5px;
  }
  .rate input {
    width: 104px;
    height: 44px;
    padding: 0 0 0 4px;
    border: 2px solid #bdbdbd;
    background: #fff;
    font: 26px Inter, 'Liberation Sans', sans-serif;
    color: #000;
  }
  .spin {
    display: grid;
    place-items: center;
    width: 38px;
    height: 42px;
    border: 2px solid #b0b0b0;
    border-radius: 10px;
    background: #eee;
  }
  .spin svg {
    width: 12px;
    height: 32px;
  }
</style>
